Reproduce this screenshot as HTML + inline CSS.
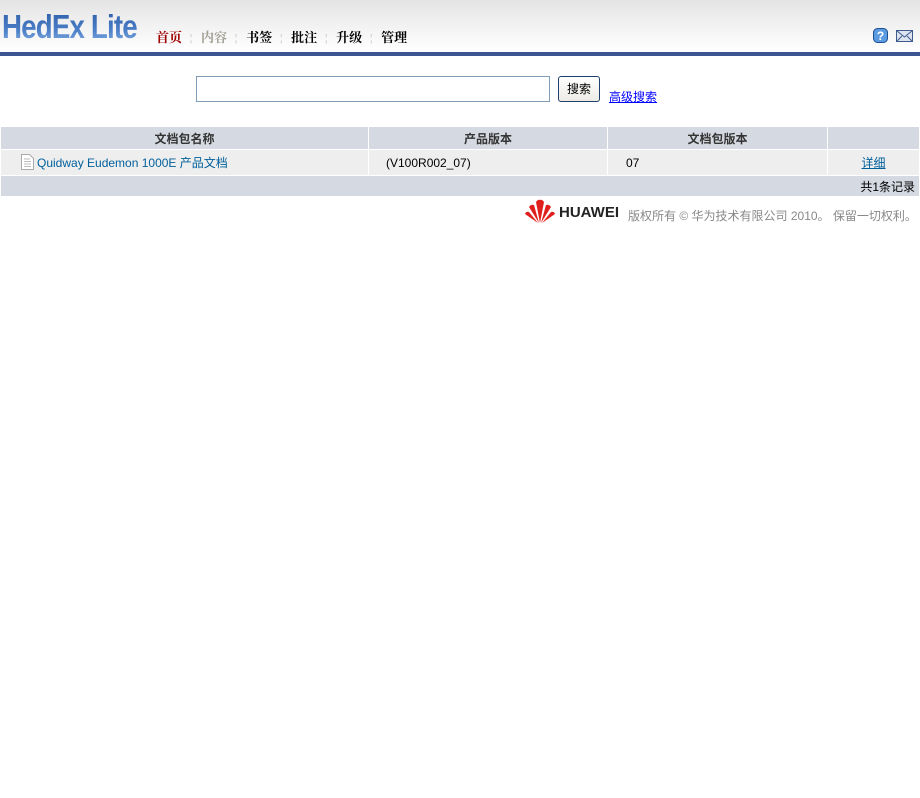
<!DOCTYPE html>
<html><head><meta charset="utf-8"><style>
*{margin:0;padding:0;box-sizing:border-box}
body{width:920px;height:798px;background:#fff;font-family:"Liberation Sans","Noto Sans CJK SC",sans-serif;font-size:12px;position:relative;overflow:hidden}
.hdr{position:absolute;left:0;top:0;width:920px;height:52px;background:linear-gradient(#e4e4e4,#fafafa 80%,#fff)}
.bar{position:absolute;left:0;top:52px;width:920px;height:4px;background:#3a5592}
.logo{position:absolute;left:2px;top:8px;font-size:33px;font-weight:bold;letter-spacing:-1px;font-family:"Liberation Sans",sans-serif;transform:scaleX(.84);transform-origin:left;background:linear-gradient(#2a5aa5,#4d80c8 60%,#8cb4e6);-webkit-background-clip:text;color:transparent;white-space:nowrap}
.nav{position:absolute;left:156px;top:27px;font-size:13px;font-weight:bold;font-family:"Liberation Serif","Noto Serif CJK SC",serif;white-space:nowrap}
.nav span{margin-right:8px}
.nav i{font-style:normal;color:#aaa;font-weight:normal;font-size:10px;margin-right:9px;position:relative;top:-1px}
.ic{position:absolute;top:28px;width:15px;height:15px}
.a{position:absolute}
table{position:absolute;left:0;top:126px;width:920px;border-collapse:separate;border-spacing:1px}
td,th{height:22px;font-size:12px}
th{background:#d5d9e1;color:#333;font-weight:bold}
.r td{background:#eeeeee;height:25px}
a{color:#00609c}
</style></head><body>
<div class="hdr"></div><div class="bar"></div>
<div class="logo">HedEx Lite</div>
<div class="nav"><span style="color:#a00000">首页</span><i>¦</i><span style="color:#a29f94">内容</span><i>¦</i><span>书签</span><i>¦</i><span>批注</span><i>¦</i><span>升级</span><i>¦</i><span>管理</span></div>
<svg class="ic" style="left:873px" viewBox="0 0 15 15"><rect x=".5" y=".5" width="14" height="14" rx="4" fill="#5b9be0" stroke="#1d4f96"/><text x="7.5" y="12" font-size="12" font-weight="bold" fill="#fff" text-anchor="middle" font-family="Liberation Sans">?</text></svg>
<svg class="ic" style="left:896px;width:17px" viewBox="0 0 17 15"><rect x=".5" y="2.5" width="16" height="11" fill="#dde3ef" stroke="#3f5a8e"/><path d="M.5 2.5L8.5 9L16.5 2.5M.5 13.5L6 8M16.5 13.5L11 8" fill="none" stroke="#3f5a8e"/></svg>
<div class="a" style="left:196px;top:76px;width:354px;height:26px;border:1px solid #7f9db9"></div>
<div class="a" style="left:558px;top:76px;width:42px;height:26px;border:1px solid #1e3f6e;border-radius:3px;background:linear-gradient(#fff,#ecebe6);font-size:12px;text-align:center;line-height:24px">搜索</div>
<a class="a" href="#" style="left:609px;top:88px;color:#00f;text-decoration:underline">高级搜索</a>
<table>
<tr><th style="width:367px">文档包名称</th><th style="width:238px">产品版本</th><th style="width:219px">文档包版本</th><th></th></tr>
<tr class="r"><td style="padding-left:20px"><svg width="13" height="16" viewBox="0 0 13 16" style="vertical-align:-3px;margin-right:3px"><path d="M.5.5h8l4 4v11H.5z" fill="#fff" stroke="#aaa"/><path d="M3 5h6M3 7.5h7M3 10h7M3 12.5h7" stroke="#bbb"/></svg><span style="color:#00609c">Quidway Eudemon 1000E 产品文档</span></td><td style="padding-left:17px">(V100R002_07)</td><td style="padding-left:18px">07</td><td style="text-align:center"><a href="#">详细</a></td></tr>
<tr><th colspan="4" style="text-align:right;font-weight:normal;color:#000;padding-right:4px;height:20px">共1条记录</th></tr>
</table>
<svg class="a" style="left:524px;top:199px" width="32" height="25" viewBox="0 0 32 25"><g fill="#e0201c"><path d="M16 24L12 3Q14 0 16 1Z"/><path d="M16 24L20 3Q18 0 16 1Z"/><path d="M15 24L5 8Q7 5 10 6Z"/><path d="M17 24L27 8Q25 5 22 6Z"/><path d="M14 24L1 15Q2 12 5 13Z"/><path d="M18 24L31 15Q30 12 27 13Z"/></g></svg>
<div class="a" style="left:559px;top:204px;font-weight:900;font-size:15px;color:#222">HUAWEI</div>
<div class="a" style="left:628px;top:207px;color:#888">版权所有 © 华为技术有限公司 2010。 保留一切权利。</div>
</body></html>
